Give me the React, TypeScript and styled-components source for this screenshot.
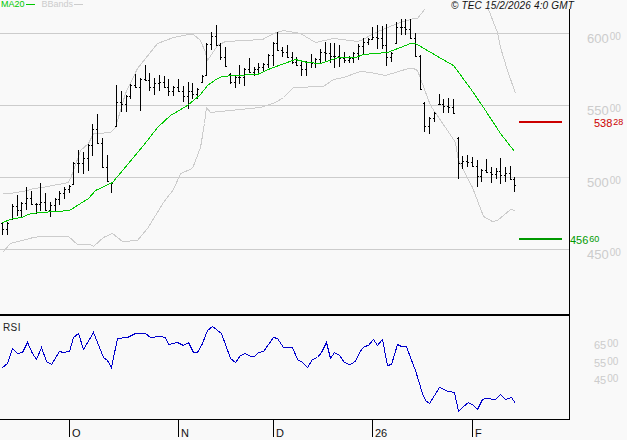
import React, { ReactElement } from 'react'
import styled, { createGlobalStyle } from 'styled-components'

type Point = [number, number]
type Bar = [number, number, number]

// x, high, low in page pixels, read off the reference
const bars: Bar[] = [
  [2, 222, 235], [7, 222, 235], [12, 204, 220], [17, 195, 216], [21, 202, 217], [26, 187, 210],
  [31, 191, 205], [36, 203, 214], [40, 183, 211], [45, 193, 211], [50, 202, 217], [55, 198, 211],
  [59, 191, 205], [64, 187, 199], [69, 185, 193], [73, 162, 185], [78, 150, 173], [83, 152, 174],
  [88, 144, 171], [92, 124, 156], [97, 114, 144], [102, 138, 168], [107, 155, 182], [111, 182, 193],
  [116, 85, 127], [121, 91, 112], [126, 95, 112], [130, 84, 99], [135, 74, 88], [140, 78, 111],
  [145, 65, 81], [149, 73, 91], [154, 78, 95], [159, 75, 91], [164, 76, 88], [168, 79, 96],
  [173, 86, 96], [178, 79, 92], [183, 86, 102], [188, 82, 109], [192, 83, 99], [197, 88, 99],
  [202, 75, 83], [206, 43, 76], [211, 32, 50], [216, 25, 46], [220, 43, 60], [225, 47, 67],
  [230, 73, 84], [235, 76, 88], [239, 65, 84], [244, 68, 86], [249, 58, 73], [254, 67, 76],
  [258, 63, 75], [263, 63, 71], [268, 54, 68], [273, 42, 66], [277, 32, 51], [282, 47, 57],
  [287, 45, 58], [292, 52, 64], [296, 57, 66], [301, 60, 76], [306, 61, 76], [311, 54, 68],
  [315, 58, 68], [320, 49, 63], [325, 42, 61], [330, 43, 63], [334, 43, 68], [339, 45, 67],
  [344, 52, 63], [349, 56, 63], [353, 52, 63], [358, 44, 60], [363, 38, 54], [368, 38, 45],
  [372, 27, 40], [377, 25, 49], [382, 26, 49], [386, 24, 66], [391, 52, 62], [396, 22, 44],
  [401, 19, 35], [405, 19, 35], [410, 19, 39], [415, 33, 57], [420, 55, 90], [424, 102, 132],
  [429, 117, 134], [434, 112, 122], [439, 94, 105], [443, 99, 113], [448, 98, 113], [453, 99, 114],
  [458, 137, 179], [462, 156, 169], [467, 155, 167], [472, 157, 167], [477, 160, 187], [481, 169, 182],
  [486, 159, 173], [491, 167, 183], [496, 168, 179], [500, 158, 184], [505, 167, 182], [510, 166, 180],
  [514, 177, 192],
]

const ma20: Point[] = [
  [2, 222], [13, 218], [22, 217], [27, 214], [38, 212], [57, 211], [69, 210], [88, 198], [95, 190],
  [112, 182], [128, 163], [143, 145], [157, 127], [170, 115], [187, 105], [200, 94], [207, 85],
  [217, 78], [222, 76], [233, 75], [257, 74], [270, 68], [295, 59], [307, 62], [320, 63], [338, 57],
  [355, 57], [363, 54], [387, 52], [400, 47], [410, 43], [415, 43], [432, 53], [453, 65], [470, 88],
  [483, 107], [500, 133], [514, 151],
]

const upperBand: Point[] = [
  [2, 193], [10, 193], [27, 190], [33, 188], [42, 187], [68, 182], [72, 173], [80, 150], [88, 143],
  [93, 133], [97, 133], [110, 132], [115, 127], [125, 93], [137, 68], [157, 43], [173, 37], [188, 34],
  [193, 34], [200, 40], [205, 52], [207, 60], [217, 45], [225, 41], [262, 39], [273, 33], [283, 30],
  [300, 33], [315, 42], [333, 38], [357, 41], [363, 39], [373, 33], [387, 27], [397, 23], [413, 18],
  [417, 18], [424, 9],
]

const upperBandEnd: Point[] = [[488, 9], [497, 32], [500, 47], [507, 70], [515, 93]]

const lowerBand: Point[] = [
  [2, 252], [10, 243], [33, 237], [40, 236], [68, 236], [77, 244], [90, 244], [93, 246], [103, 237],
  [112, 233], [122, 241], [137, 240], [147, 228], [163, 202], [173, 189], [180, 173], [192, 168],
  [200, 147], [204, 123], [206, 107], [210, 112], [260, 107], [275, 102], [283, 97], [293, 87],
  [323, 86], [333, 79], [343, 77], [360, 71], [370, 72], [385, 75], [408, 68], [413, 68], [417, 70],
  [430, 105], [447, 130], [455, 142], [458, 160], [472, 187], [483, 216], [492, 221], [497, 220],
  [510, 209], [515, 210],
]

const rsi: Point[] = [
  [2, 367], [7, 363], [12, 348], [17, 353], [22, 352], [27, 342], [32, 353], [36, 359], [41, 347],
  [46, 361], [51, 364], [59, 351], [63, 352], [69, 351], [73, 337], [78, 333], [83, 349], [93, 332],
  [103, 357], [107, 360], [111, 367], [117, 338], [127, 337], [135, 333], [145, 333], [150, 337],
  [160, 336], [165, 337], [168, 344], [177, 342], [183, 345], [188, 342], [193, 352], [197, 352],
  [202, 343], [207, 330], [212, 326], [221, 333], [230, 358], [235, 362], [240, 355], [245, 353],
  [250, 356], [254, 356], [258, 352], [263, 351], [273, 337], [277, 338], [283, 347], [292, 347],
  [297, 359], [302, 362], [307, 367], [312, 359], [317, 357], [321, 352], [326, 342], [330, 358],
  [334, 352], [339, 355], [344, 362], [349, 364], [354, 362], [361, 349], [364, 346], [368, 345],
  [373, 339], [377, 345], [382, 339], [387, 365], [391, 364], [397, 344], [401, 346], [406, 346],
  [410, 357], [415, 370], [422, 393], [425, 400], [429, 403], [439, 387], [448, 391], [454, 392],
  [458, 411], [462, 407], [468, 402], [473, 405], [477, 409], [482, 399], [485, 398], [495, 399],
  [500, 394], [505, 399], [511, 397], [515, 403],
]

const priceGrid = [33, 105, 177, 249]
const priceScale = [
  { y: 33, main: '600', cents: '00' },
  { y: 105, main: '550', cents: '00' },
  { y: 177, main: '500', cents: '00' },
  { y: 249, main: '450', cents: '00' },
]
const rsiScale = [
  { y: 339, main: '65', cents: '00' },
  { y: 357, main: '55', cents: '00' },
  { y: 374, main: '45', cents: '00' },
]
const months = [
  { x: 69, label: 'O' },
  { x: 178, label: 'N' },
  { x: 273, label: 'D' },
  { x: 372, label: '26' },
  { x: 472, label: 'F' },
]

const toPoints = (line: Point[]) => line.map(([x, y]) => `${x + 0.5},${y + 0.5}`).join(' ')
const clamp = (v: number, lo: number, hi: number) => Math.min(hi, Math.max(lo, v))

// open and close ticks follow the neighbouring bars
const barPath = () => {
  let prevClose = bars[0][1]
  return bars
    .map(([x, high, low], i) => {
      const next = bars[i + 1] || bars[i]
      const close = Math.round(clamp((next[1] + next[2]) / 2, high + 1, low - 1))
      const open = Math.round(clamp(prevClose, high + 1, low - 1))
      prevClose = close
      const cx = x + 0.5
      return `M${cx} ${high}V${low}M${cx - 1.5} ${open + 0.5}H${cx}M${cx} ${close + 0.5}H${cx + 1.5}`
    })
    .join('')
}

const GlobalStyle = createGlobalStyle`
  html, body {
    margin: 0;
    background: #f9f9f9;
  }
`

const Page = styled.div`
  width: 627px;
  height: 440px;
  overflow: hidden;
  display: flex;
  flex-direction: column;
  background: #f9f9f9;
  font-family: 'Liberation Sans', Arial, sans-serif;
`

const Legend = styled.div`
  height: 9px;
  display: flex;
  align-items: flex-start;
  padding: 0 53px 0 1px;
  font-size: 9px;
  line-height: 9px;
  white-space: nowrap;
`

const LegendItem = styled.span<{ $color: string; $gap: number }>`
  display: flex;
  align-items: center;
  gap: 1px;
  margin-right: ${(p) => p.$gap}px;
  color: ${(p) => p.$color};
  &::after {
    content: '';
    width: 9px;
    height: 1px;
    background: ${(p) => p.$color};
  }
`

const Copyright = styled.span`
  margin-left: auto;
  font-size: 10px;
  line-height: 12px;
  font-style: italic;
  letter-spacing: 0.17px;
  color: #111;
`

const Row = styled.div<{ $height: number }>`
  height: ${(p) => p.$height}px;
  display: flex;
`

const Plot = styled.div`
  position: relative;
  width: 570px;
  box-sizing: border-box;
  border-right: 1px solid #000;
  svg {
    display: block;
  }
`

const Rail = styled.div`
  position: relative;
  flex: 1;
`

const Divider = styled.div`
  width: 570px;
  height: 2px;
  background: #000;
`

const ScaleLabel = styled.span<{ $color: string; $size: number; $cents: number; $drop: number }>`
  position: absolute;
  display: flex;
  align-items: flex-start;
  color: ${(p) => p.$color};
  font-size: ${(p) => p.$size}px;
  line-height: 12px;
  small {
    margin: ${(p) => p.$drop}px 0 0 1px;
    font-size: ${(p) => p.$cents}px;
    line-height: 9px;
  }
`

const PanelTitle = styled.span`
  position: absolute;
  left: 3px;
  top: 6px;
  font-size: 10px;
  line-height: 11px;
  letter-spacing: 0.4px;
  color: #222;
`

const TimeAxis = styled.div`
  position: relative;
  width: 570px;
  height: 21px;
  box-sizing: border-box;
  border-top: 1px solid #000;
`

const MonthTick = styled.span`
  position: absolute;
  top: 0;
  height: 17px;
  padding-left: 2px;
  border-left: 1px solid #000;
  display: flex;
  align-items: flex-end;
  font-size: 11px;
  line-height: 8px;
  color: #111;
`

const App = (): ReactElement => {
  return (
    <Page>
      <GlobalStyle />
      <Legend>
        <LegendItem $color="#00c800" $gap={7}>MA20</LegendItem>
        <LegendItem $color="#cccccc" $gap={0}>BBands</LegendItem>
        <Copyright>© TEC 15/2/2026 4:0 GMT</Copyright>
      </Legend>
      <Row $height={305}>
        <Plot>
          <svg width={569} height={305} viewBox="0 9 569 305" shapeRendering="crispEdges" fill="none">
            {priceGrid.map((y) => (
              <line key={y} x1={0} x2={569} y1={y + 0.5} y2={y + 0.5} stroke="#cccccc" />
            ))}
            <polyline points={toPoints(upperBand)} stroke="#cccccc" />
            <polyline points={toPoints(upperBandEnd)} stroke="#cccccc" />
            <polyline points={toPoints(lowerBand)} stroke="#cccccc" />
            <path d={barPath()} stroke="#000" />
            <polyline points={toPoints(ma20)} stroke="#00c800" />
            <rect x={519} y={121} width={43} height={2} fill="#cc0000" />
            <rect x={519} y={238} width={43} height={2} fill="#009900" />
          </svg>
        </Plot>
        <Rail>
          {priceScale.map((s) => (
            <ScaleLabel key={s.main} $color="#cccccc" $size={13} $cents={10} $drop={-1} style={{ left: 17, top: s.y - 9 }}>
              {s.main}
              <small>{s.cents}</small>
            </ScaleLabel>
          ))}
          <ScaleLabel $color="#cc0000" $size={11} $cents={9} $drop={1} style={{ left: 24, top: 108 }}>
            538<small>28</small>
          </ScaleLabel>
          <ScaleLabel $color="#009900" $size={11} $cents={9} $drop={1} style={{ left: 0, top: 225 }}>
            456<small>60</small>
          </ScaleLabel>
        </Rail>
      </Row>
      <Divider />
      <Row $height={103}>
        <Plot>
          <PanelTitle>RSI</PanelTitle>
          <svg width={569} height={103} viewBox="0 316 569 103" shapeRendering="crispEdges" fill="none">
            <polyline points={toPoints(rsi)} stroke="#0000cc" />
          </svg>
        </Plot>
        <Rail>
          {rsiScale.map((s) => (
            <ScaleLabel key={s.main} $color="#cccccc" $size={11} $cents={10} $drop={0} style={{ left: 24, top: s.y - 316 }}>
              {s.main}
              <small>{s.cents}</small>
            </ScaleLabel>
          ))}
        </Rail>
      </Row>
      <TimeAxis>
        {months.map((m) => (
          <MonthTick key={m.label} style={{ left: m.x }}>
            {m.label}
          </MonthTick>
        ))}
      </TimeAxis>
    </Page>
  )
}

export default App
